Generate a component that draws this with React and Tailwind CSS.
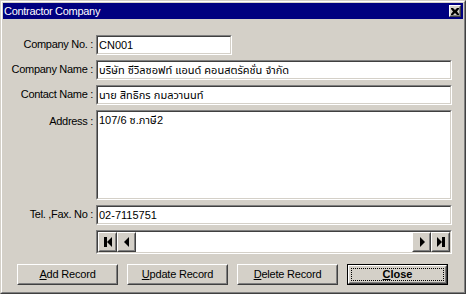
import React from 'react';

const font = { fontFamily: '"Liberation Sans", Arial, "Noto Sans Thai", "Noto Sans", sans-serif' };

// sunken 3D edit box (Win2k style)
const Sunken = ({ className = '', children }) => (
  <div className={`border border-t-[#808080] border-l-[#808080] border-b-white border-r-white ${className}`}>
    <div className="h-full w-full border border-t-[#404040] border-l-[#404040] border-b-[#d4d0c8] border-r-[#d4d0c8] bg-white">
      {children}
    </div>
  </div>
);

const Raised = ({ className = '', children }) => (
  <div className={`border border-t-white border-l-white border-b-[#404040] border-r-[#404040] ${className}`}>
    <div className="flex h-full w-full items-center justify-center border border-t-[#d4d0c8] border-l-[#d4d0c8] border-b-[#808080] border-r-[#808080] bg-[#d4d0c8]">
      {children}
    </div>
  </div>
);

const Field = ({ label, value, width = 'w-[356px]' }) => (
  <div className="flex h-[20px]">
    <div className="w-[90px] pt-[3px] text-right leading-[13px] tracking-[-0.3px]">{label}</div>
    <Sunken className={`ml-[3px] h-[20px] ${width}`}>
      <div className="px-[1px] pt-[2px] leading-[13px]">{value}</div>
    </Sunken>
  </div>
);

const Tri = ({ dir, bar }) => (
  <svg width="12" height="12" viewBox="0 0 12 12">
    {dir === 'left' ? (
      <>
        {bar && <rect x="2" y="1" width="3" height="10" fill="black" />}
        <polygon points={bar ? '10,1 5,6 10,11' : '8,1 3,6 8,11'} fill="black" />
      </>
    ) : (
      <>
        <polygon points={bar ? '2,1 7,6 2,11' : '4,1 9,6 4,11'} fill="black" />
        {bar && <rect x="7" y="1" width="3" height="10" fill="black" />}
      </>
    )}
  </svg>
);

const Btn = ({ hot, rest }) => (
  <Raised className="h-[21px] w-[101px]">
    <span className="leading-[13px] tracking-[-0.2px]">
      <span className="underline">{hot}</span>
      {rest}
    </span>
  </Raised>
);

export default function App() {
  return (
    <div className="h-[294px] w-[466px] bg-[#d4d0c8] text-[11px] text-black" style={font}>
      <div className="h-full w-full border border-t-[#d4d0c8] border-l-[#d4d0c8] border-b-[#404040] border-r-[#404040]">
        <div className="h-full w-full border border-t-white border-l-white border-b-[#808080] border-r-[#808080] p-[1px]">
          {/* Title bar */}
          <div className="flex h-[16px] items-center justify-between bg-[#000080] pl-[1px] pr-[2px]">
            <span className="leading-[13px] tracking-[-0.3px] text-white">Contractor Company</span>
            <Raised className="h-[12px] w-[12px]">
              <svg width="8" height="7" viewBox="0 0 8 7">
                <path d="M0 0h2l2 2 2-2h2v1L6 3.5 8 6v1H6L4 5 2 7H0V6l2-2.5L0 1z" fill="black" />
              </svg>
            </Raised>
          </div>

          {/* Form */}
          <div className="mt-[16px] flex flex-col gap-[5px]">
            <Field label="Company No. :" value="CN001" width="w-[136px]" />
            <Field label="Company Name :" value="บริษัท ซีวิลซอฟท์ แอนด์ คอนสตรัคชั่น จำกัด" />
            <Field label="Contact Name :" value="นาย สิทธิกร กมลวานนท์" />
            <div className="flex h-[90px]">
              <div className="w-[90px] pt-[5px] text-right leading-[13px] tracking-[-0.3px]">Address :</div>
              <Sunken className="ml-[3px] h-[90px] w-[356px]">
                <div className="px-[1px] pt-[2px] leading-[13px]">107/6 ซ.ภาษี2</div>
              </Sunken>
            </div>
            <Field label="Tel. ,Fax. No :" value="02-7115751" />
            <div className="flex h-[24px]">
              <div className="w-[90px]" />
              <Sunken className="ml-[3px] h-[24px] w-[356px]">
                <div className="flex h-full items-center justify-between">
                  <div className="flex">
                    <Raised className="h-[20px] w-[19px]"><Tri dir="left" bar /></Raised>
                    <Raised className="h-[20px] w-[19px]"><Tri dir="left" /></Raised>
                  </div>
                  <div className="flex">
                    <Raised className="h-[20px] w-[19px]"><Tri dir="right" /></Raised>
                    <Raised className="h-[20px] w-[19px]"><Tri dir="right" bar /></Raised>
                  </div>
                </div>
              </Sunken>
            </div>
          </div>

          {/* Buttons */}
          <div className="ml-[14px] mt-[10px] flex gap-[9px]">
            <Btn hot="A" rest="dd Record" />
            <Btn hot="U" rest="pdate Record" />
            <Btn hot="D" rest="elete Record" />
            <div className="h-[21px] w-[101px] border border-black">
              <div className="h-full w-full border border-t-white border-l-white border-b-[#404040] border-r-[#404040]">
                <div className="flex h-full w-full items-center justify-center border border-t-[#d4d0c8] border-l-[#d4d0c8] border-b-[#808080] border-r-[#808080] p-[1px]">
                  <div className="flex h-full w-full items-center justify-center border border-dotted border-black">
                    <span className="font-bold leading-[13px]">
                      <span className="underline">C</span>lose
                    </span>
                  </div>
                </div>
              </div>
            </div>
          </div>
        </div>
      </div>
    </div>
  );
}
